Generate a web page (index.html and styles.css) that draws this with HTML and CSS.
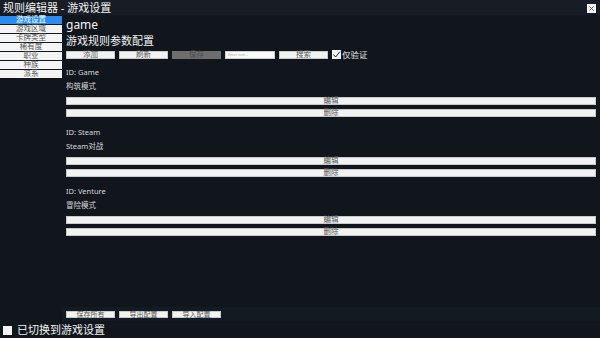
FILE: index.html
```html
<!DOCTYPE html>
<html lang="zh">
<head>
<meta charset="utf-8">
<link rel="stylesheet" href="styles.css">
</head>
<body>
<div class="app">
  <header class="titlebar">
    <span class="title">规则编辑器 - 游戏设置</span>
    <span class="close">
      <svg viewBox="0 0 10 10" width="7" height="7"><path d="M2 2L8 8M8 2L2 8" stroke="#666" stroke-width="1.4"/></svg>
    </span>
  </header>
  <div class="main">
    <nav class="sidebar">
      <div class="nav-item active">游戏设置</div>
      <div class="nav-item">游戏区域</div>
      <div class="nav-item">卡牌类型</div>
      <div class="nav-item">稀有度</div>
      <div class="nav-item">职业</div>
      <div class="nav-item">种族</div>
      <div class="nav-item">派系</div>
    </nav>
    <section class="content">
      <div class="h1">game</div>
      <div class="h2">游戏规则参数配置</div>
      <div class="toolbar">
        <span class="btn">添加</span>
        <span class="btn">刷新</span>
        <span class="btn disabled">保存</span>
        <span class="input">Enter text...</span>
        <span class="btn">搜索</span>
        <span class="check">
          <span class="box"><svg viewBox="0 0 10 10" width="9" height="9"><path d="M1.5 5L4 7.8L8.8 1.8" fill="none" stroke="#222" stroke-width="1.1"/></svg></span>
          <span class="check-label">仅验证</span>
        </span>
      </div>
      <div class="groups">
        <div class="group">
          <div class="gid">ID: Game</div>
          <div class="gname">构筑模式</div>
          <div class="bar">编辑</div>
          <div class="bar">删除</div>
        </div>
        <div class="group">
          <div class="gid">ID: Steam</div>
          <div class="gname">Steam对战</div>
          <div class="bar">编辑</div>
          <div class="bar">删除</div>
        </div>
        <div class="group">
          <div class="gid">ID: Venture</div>
          <div class="gname">冒险模式</div>
          <div class="bar">编辑</div>
          <div class="bar">删除</div>
        </div>
      </div>
      <div class="footer-bar">
        <span class="btn small">保存所有</span>
        <span class="btn small">导出配置</span>
        <span class="btn small">导入配置</span>
      </div>
    </section>
  </div>
  <footer class="status">
    <span class="status-box"></span>
    <span class="status-text">已切换到游戏设置</span>
  </footer>
</div>
</body>
</html>
```
FILE: styles.css
```css
* { box-sizing: border-box; }
html, body { margin: 0; padding: 0; }
body {
  width: 600px;
  height: 338px;
  background: #11161d;
  font-family: "Noto Sans", "Noto Sans CJK SC", sans-serif;
  color: #e8eaec;
  overflow: hidden;
}
.app { display: flex; flex-direction: column; height: 338px; }
.titlebar {
  height: 15px;
  background: #171c25;
  display: flex;
  align-items: center;
  justify-content: space-between;
  padding: 0 4px 0 3px;
}
.title { font-size: 11px; line-height: 15px; color: #f2f2f2; }
.close {
  width: 9px; height: 9px;
  background: #f4f4f4;
  display: flex; align-items: center; justify-content: center;
  margin-top: 1px;
}
.main { display: flex; flex: 1; min-height: 0; }
.sidebar { width: 62px; display: flex; flex-direction: column; gap: 1px; padding-top: 1px; }
.nav-item {
  height: 8px;
  flex: none;
  background: #f4f4f4;
  color: #555;
  font-family: "Liberation Sans", "Noto Sans CJK SC", sans-serif;
  font-size: 7.5px;
  line-height: 8px;
  text-align: center;
  white-space: nowrap;
}
.nav-item.active { background: #2b8cf0; color: #ffffff; }
.content { flex: 1; padding: 1px 4px 0 4px; display: flex; flex-direction: column; }
.h1 { font-size: 12px; line-height: 18px; color: #f2f2f2; }
.h2 { font-size: 11px; line-height: 13px; color: #f2f2f2; }
.toolbar { display: flex; align-items: center; gap: 4px; margin-top: 3px; height: 9px; }
.btn {
  width: 49px;
  height: 8px;
  background: #f2f2f2;
  border: 1px solid #c9c9c9;
  color: #555;
  font-family: "Liberation Sans", "Noto Sans CJK SC", sans-serif;
  font-size: 7.5px;
  line-height: 6px;
  text-align: center;
  white-space: nowrap;
}
.btn.disabled { background: #6e6e6e; border-color: #6e6e6e; color: #4a4a4a; }
.input {
  width: 50px; height: 8px;
  background: #fafafa;
  border: 1px solid #ccc;
  font-size: 4px;
  line-height: 6px;
  color: #aaa; font-style: italic;
  padding-left: 2px;
}
.check { display: flex; align-items: center; gap: 1px; }
.box { width: 9px; height: 9px; background: #f4f4f4; display: flex; align-items: center; justify-content: center; }
.check-label { font-size: 8.5px; line-height: 9px; color: #e8eaec; }
.groups { margin-top: 6px; display: flex; flex-direction: column; }
.group { display: flex; flex-direction: column; height: 59.5px; }
.gid { font-size: 7.5px; line-height: 14px; color: #d6d9dc; }
.gname { font-size: 7.5px; line-height: 14px; color: #d6d9dc; margin-bottom: 4px; }
.bar {
  height: 8px;
  flex: none;
  background: #f2f2f2;
  border: 1px solid #c9c9c9;
  color: #555;
  font-family: "Liberation Sans", "Noto Sans CJK SC", sans-serif;
  font-size: 7.5px;
  line-height: 6px;
  text-align: center;
  margin-bottom: 4px;
}
.footer-bar {
  margin-top: auto;
  margin-left: -4px;
  margin-right: -4px;
  margin-bottom: 1px;
  height: 14px;
  background: #141a22;
  display: flex;
  align-items: center;
  gap: 4px;
  padding-left: 4px;
}
.btn.small { height: 7px; font-size: 7px; line-height: 5px; }
.status { height: 16px; display: flex; align-items: center; gap: 5px; padding-left: 3px; }
.status-box { width: 9px; height: 9px; background: #f4f4f4; }
.status-text { font-size: 11px; line-height: 16px; color: #f2f2f2; }
```
